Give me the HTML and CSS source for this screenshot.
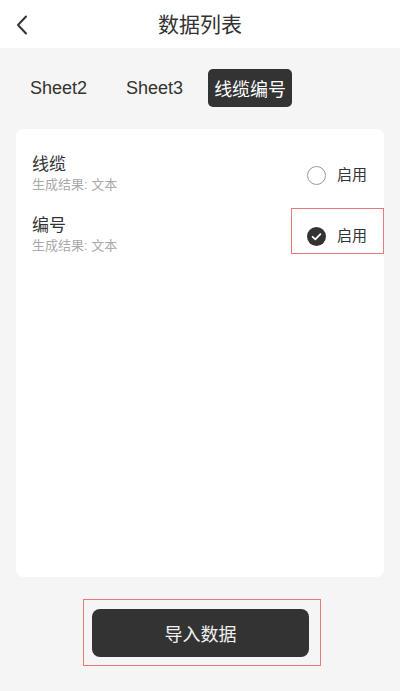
FILE: index.html
```html
<!DOCTYPE html>
<html lang="zh-CN">
<head>
<meta charset="utf-8">
<title>数据列表</title>
<link rel="stylesheet" href="styles.css">
</head>
<body>
<div class="page">
  <header class="header">
    <div class="back">
      <svg width="12" height="20" viewBox="0 0 12 20"><path d="M10 1.5 L2 10 L10 18.5" fill="none" stroke="#333" stroke-width="2" stroke-linecap="round" stroke-linejoin="round"/></svg>
    </div>
    <h1 class="title">数据列表</h1>
    <div class="spacer"></div>
  </header>

  <nav class="tabs">
    <span class="tab">Sheet2</span>
    <span class="tab">Sheet3</span>
    <span class="tab active">线缆编号</span>
  </nav>

  <section class="card">
    <div class="row">
      <div class="info">
        <div class="name">线缆</div>
        <div class="sub">生成结果: 文本</div>
      </div>
      <div class="toggle">
        <span class="radio"></span>
        <span class="label">启用</span>
      </div>
    </div>
    <div class="row">
      <div class="info">
        <div class="name">编号</div>
        <div class="sub">生成结果: 文本</div>
      </div>
      <div class="toggle marked">
        <span class="radio checked">
          <svg width="19" height="19" viewBox="0 0 19 19"><circle cx="9.5" cy="9.5" r="9.5" fill="#333"/><path d="M5.6 9.8 L8.3 12.3 L13.4 7.2" fill="none" stroke="#fff" stroke-width="1.8" stroke-linecap="round" stroke-linejoin="round"/></svg>
        </span>
        <span class="label">启用</span>
      </div>
    </div>
  </section>

  <footer class="footer">
    <div class="btn-frame">
      <button class="btn">导入数据</button>
    </div>
  </footer>
</div>
</body>
</html>
```

FILE: styles.css
```css
* { box-sizing: border-box; }
html, body { margin: 0; padding: 0; }
body {
  background: #f5f5f5;
  font-family: "Liberation Sans", "Noto Sans CJK SC", sans-serif;
  color: #333;
}
.page {
  height: 691px;
  display: flex;
  flex-direction: column;
}
.header {
  height: 48px;
  flex: none;
  background: #fff;
  display: grid;
  grid-template-columns: 60px 1fr 60px;
  align-items: center;
}
.back {
  padding-left: 16px;
  display: flex;
  align-items: center;
  padding-top: 1px;
}
.back svg { display: block; }
.title {
  margin: 0;
  text-align: center;
  font-size: 21px;
  font-weight: normal;
  line-height: 28px;
  padding-top: 2px;
  color: #333;
}
.tabs {
  flex: none;
  margin: 21px 16px 22px 24px;
  display: flex;
  height: 38px;
}
.tab {
  display: flex;
  align-items: center;
  padding: 0 6px;
  font-size: 18px;
  color: #333;
  border-radius: 5px;
  margin-right: 27px;
}
.tab:nth-child(2) { margin-right: 19px; }
.tab.active {
  background: #333;
  color: #fff;
  margin-right: 0;
}
.card {
  flex: 1;
  margin: 0 16px;
  background: #fff;
  border-radius: 8px;
  padding-top: 14px;
}
.row {
  display: flex;
  align-items: center;
  justify-content: space-between;
  height: 61px;
  padding-left: 16px;
}
.name {
  font-size: 17px;
  line-height: 22px;
  color: #333;
}
.sub {
  font-size: 13px;
  line-height: 17px;
  color: #aaa;
}
.toggle {
  display: flex;
  align-items: center;
  gap: 11px;
  width: 93px;
  height: 46px;
  padding: 18px 16px 8px 15px;
  border: 1px solid transparent;
  margin-bottom: 7px;
}
.toggle.marked { border-color: #e8787a; }
.radio {
  width: 19px;
  height: 19px;
  flex: none;
  border: 1px solid #999;
  border-radius: 50%;
}
.radio.checked { border: none; }
.radio svg { display: block; }
.label {
  font-size: 15px;
  line-height: 18px;
  color: #333;
}
.footer {
  flex: none;
  display: flex;
  justify-content: center;
  padding: 22px 0 25px 4px;
}
.btn-frame {
  border: 1px solid #e8787a;
  padding: 9px 11px 8px 8px;
}
.btn {
  display: block;
  width: 217px;
  height: 48px;
  border: none;
  border-radius: 8px;
  background: #333;
  color: #f0f0f0;
  font-family: "Liberation Sans", "Noto Sans CJK SC", sans-serif;
  font-size: 18px;
}
```
